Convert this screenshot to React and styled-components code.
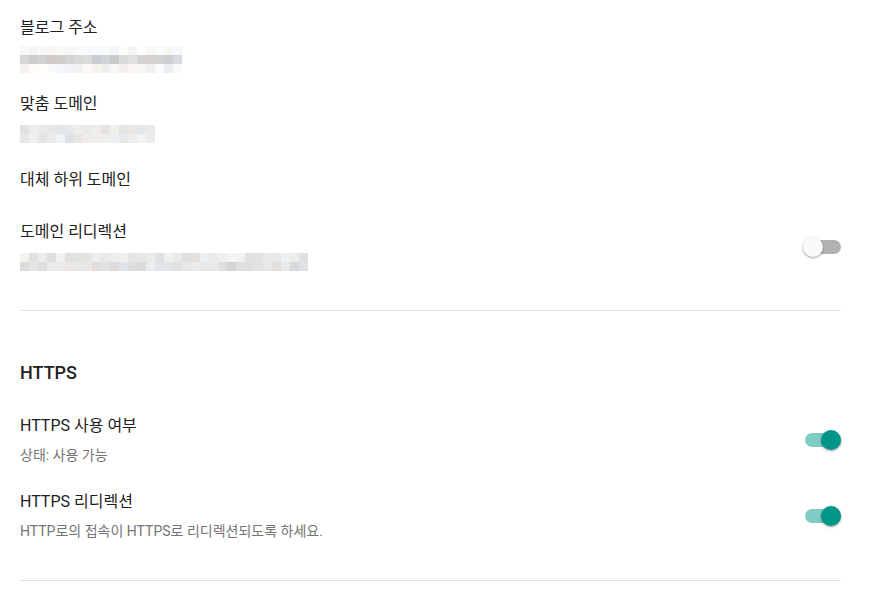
import React from 'react'
import styled, { createGlobalStyle } from 'styled-components'

const GlobalStyle = createGlobalStyle`
  html, body {
    margin: 0;
    padding: 0;
    background: #fff;
  }
  body {
    font-family: Roboto, "Noto Sans CJK KR", "Noto Sans", sans-serif;
    color: #212121;
    -webkit-font-smoothing: antialiased;
  }
`

const Page = styled.div`
  width: 821px;
  padding: 16px 50px 0 20px;
`

const Section = styled.section`
  display: flex;
  flex-direction: column;
  gap: ${p => p.$gap || 22}px;
  padding-bottom: ${p => p.$bottom || 0}px;
  border-bottom: 1px solid #e0e0e0;
  margin-bottom: ${p => p.$after || 0}px;
`

const SectionTitle = styled.h2`
  margin: 0 0 2px;
  font-size: 18px;
  line-height: 28px;
  font-weight: 500;
  color: #212121;
`

const Row = styled.div`
  display: flex;
  align-items: center;
  justify-content: space-between;
  padding-bottom: ${p => p.$extra || 0}px;
`

const Text = styled.div`
  display: flex;
  flex-direction: column;
`

const Label = styled.div`
  font-size: 16px;
  line-height: 24px;
  color: #212121;
`

const Hint = styled.div`
  margin-top: 7px;
  font-size: 14px;
  line-height: 20px;
  color: #757575;
`

const Value = styled.div`
  margin-top: 6px;
  height: 24px;
  display: flex;
  align-items: center;
`

const Mosaic = styled.div`
  display: grid;
  grid-template-columns: repeat(${p => p.$cols}, 9px);
  grid-auto-rows: 9px;
  margin-top: ${p => p.$shift || 0}px;
`

const Cell = styled.span`
  display: block;
  background: ${p => p.$c};
`

const Switch = styled.div`
  position: relative;
  width: 38px;
  height: 20px;
  flex-shrink: 0;
`

const Track = styled.div`
  position: absolute;
  left: 2px;
  right: 0;
  top: 3px;
  height: 14px;
  border-radius: 7px;
  background: ${p => (p.$on ? '#80cbc4' : '#b2b2b2')};
`

const Thumb = styled.div`
  position: absolute;
  top: 0;
  left: ${p => (p.$on ? '18px' : '0')};
  width: 20px;
  height: 20px;
  border-radius: 50%;
  background: ${p => (p.$on ? '#009688' : '#fafafa')};
  box-shadow: 0 1px 3px rgba(0, 0, 0, 0.3), 0 1px 1px rgba(0, 0, 0, 0.12);
`

const Toggle = ({ on }) => (
  <Switch>
    <Track $on={on} />
    <Thumb $on={on} />
  </Switch>
)

// deterministic noise for the redacted values
const rand = seed => {
  let s = seed
  return () => {
    s = (s * 9301 + 49297) % 233280
    return s / 233280
  }
}

const shade = (r, lo, hi) => {
  const v = Math.round(lo + r() * (hi - lo))
  const t = Math.round((r() - 0.5) * 8)
  return `rgb(${v + t}, ${v}, ${v - t})`
}

const makeRows = (seed, cols, bands) => {
  const r = rand(seed)
  return bands.map(([lo, hi]) =>
    Array.from({ length: cols }, () => shade(r, lo, hi))
  )
}

const Redacted = ({ seed, cols, bands, shift }) => {
  const rows = makeRows(seed, cols, bands)
  return (
    <Mosaic $cols={cols} $shift={shift}>
      {rows.flat().map((c, i) => (
        <Cell key={i} $c={c} />
      ))}
    </Mosaic>
  )
}

const App = () => (
  <Page>
    <GlobalStyle />
    <Section $bottom={36} $after={48}>
      <Row>
        <Text>
          <Label>블로그 주소</Label>
          <Value>
            <Redacted seed={7} cols={18} bands={[[244, 254], [200, 226], [238, 254]]} shift={2} />
          </Value>
        </Text>
      </Row>
      <Row>
        <Text>
          <Label>맞춤 도메인</Label>
          <Value>
            <Redacted seed={23} cols={15} bands={[[222, 240], [226, 244]]} />
          </Value>
        </Text>
      </Row>
      <Row $extra={6}>
        <Text>
          <Label>대체 하위 도메인</Label>
        </Text>
      </Row>
      <Row>
        <Text>
          <Label>도메인 리디렉션</Label>
          <Value>
            <Redacted seed={41} cols={32} bands={[[222, 244], [212, 238]]} />
          </Value>
        </Text>
        <Toggle on={false} />
      </Row>
    </Section>

    <Section $gap={25} $bottom={39}>
      <SectionTitle>HTTPS</SectionTitle>
      <Row>
        <Text>
          <Label>HTTPS 사용 여부</Label>
          <Hint>상태: 사용 가능</Hint>
        </Text>
        <Toggle on />
      </Row>
      <Row>
        <Text>
          <Label>HTTPS 리디렉션</Label>
          <Hint>HTTP로의 접속이 HTTPS로 리디렉션되도록 하세요.</Hint>
        </Text>
        <Toggle on />
      </Row>
    </Section>
  </Page>
)

export default App
